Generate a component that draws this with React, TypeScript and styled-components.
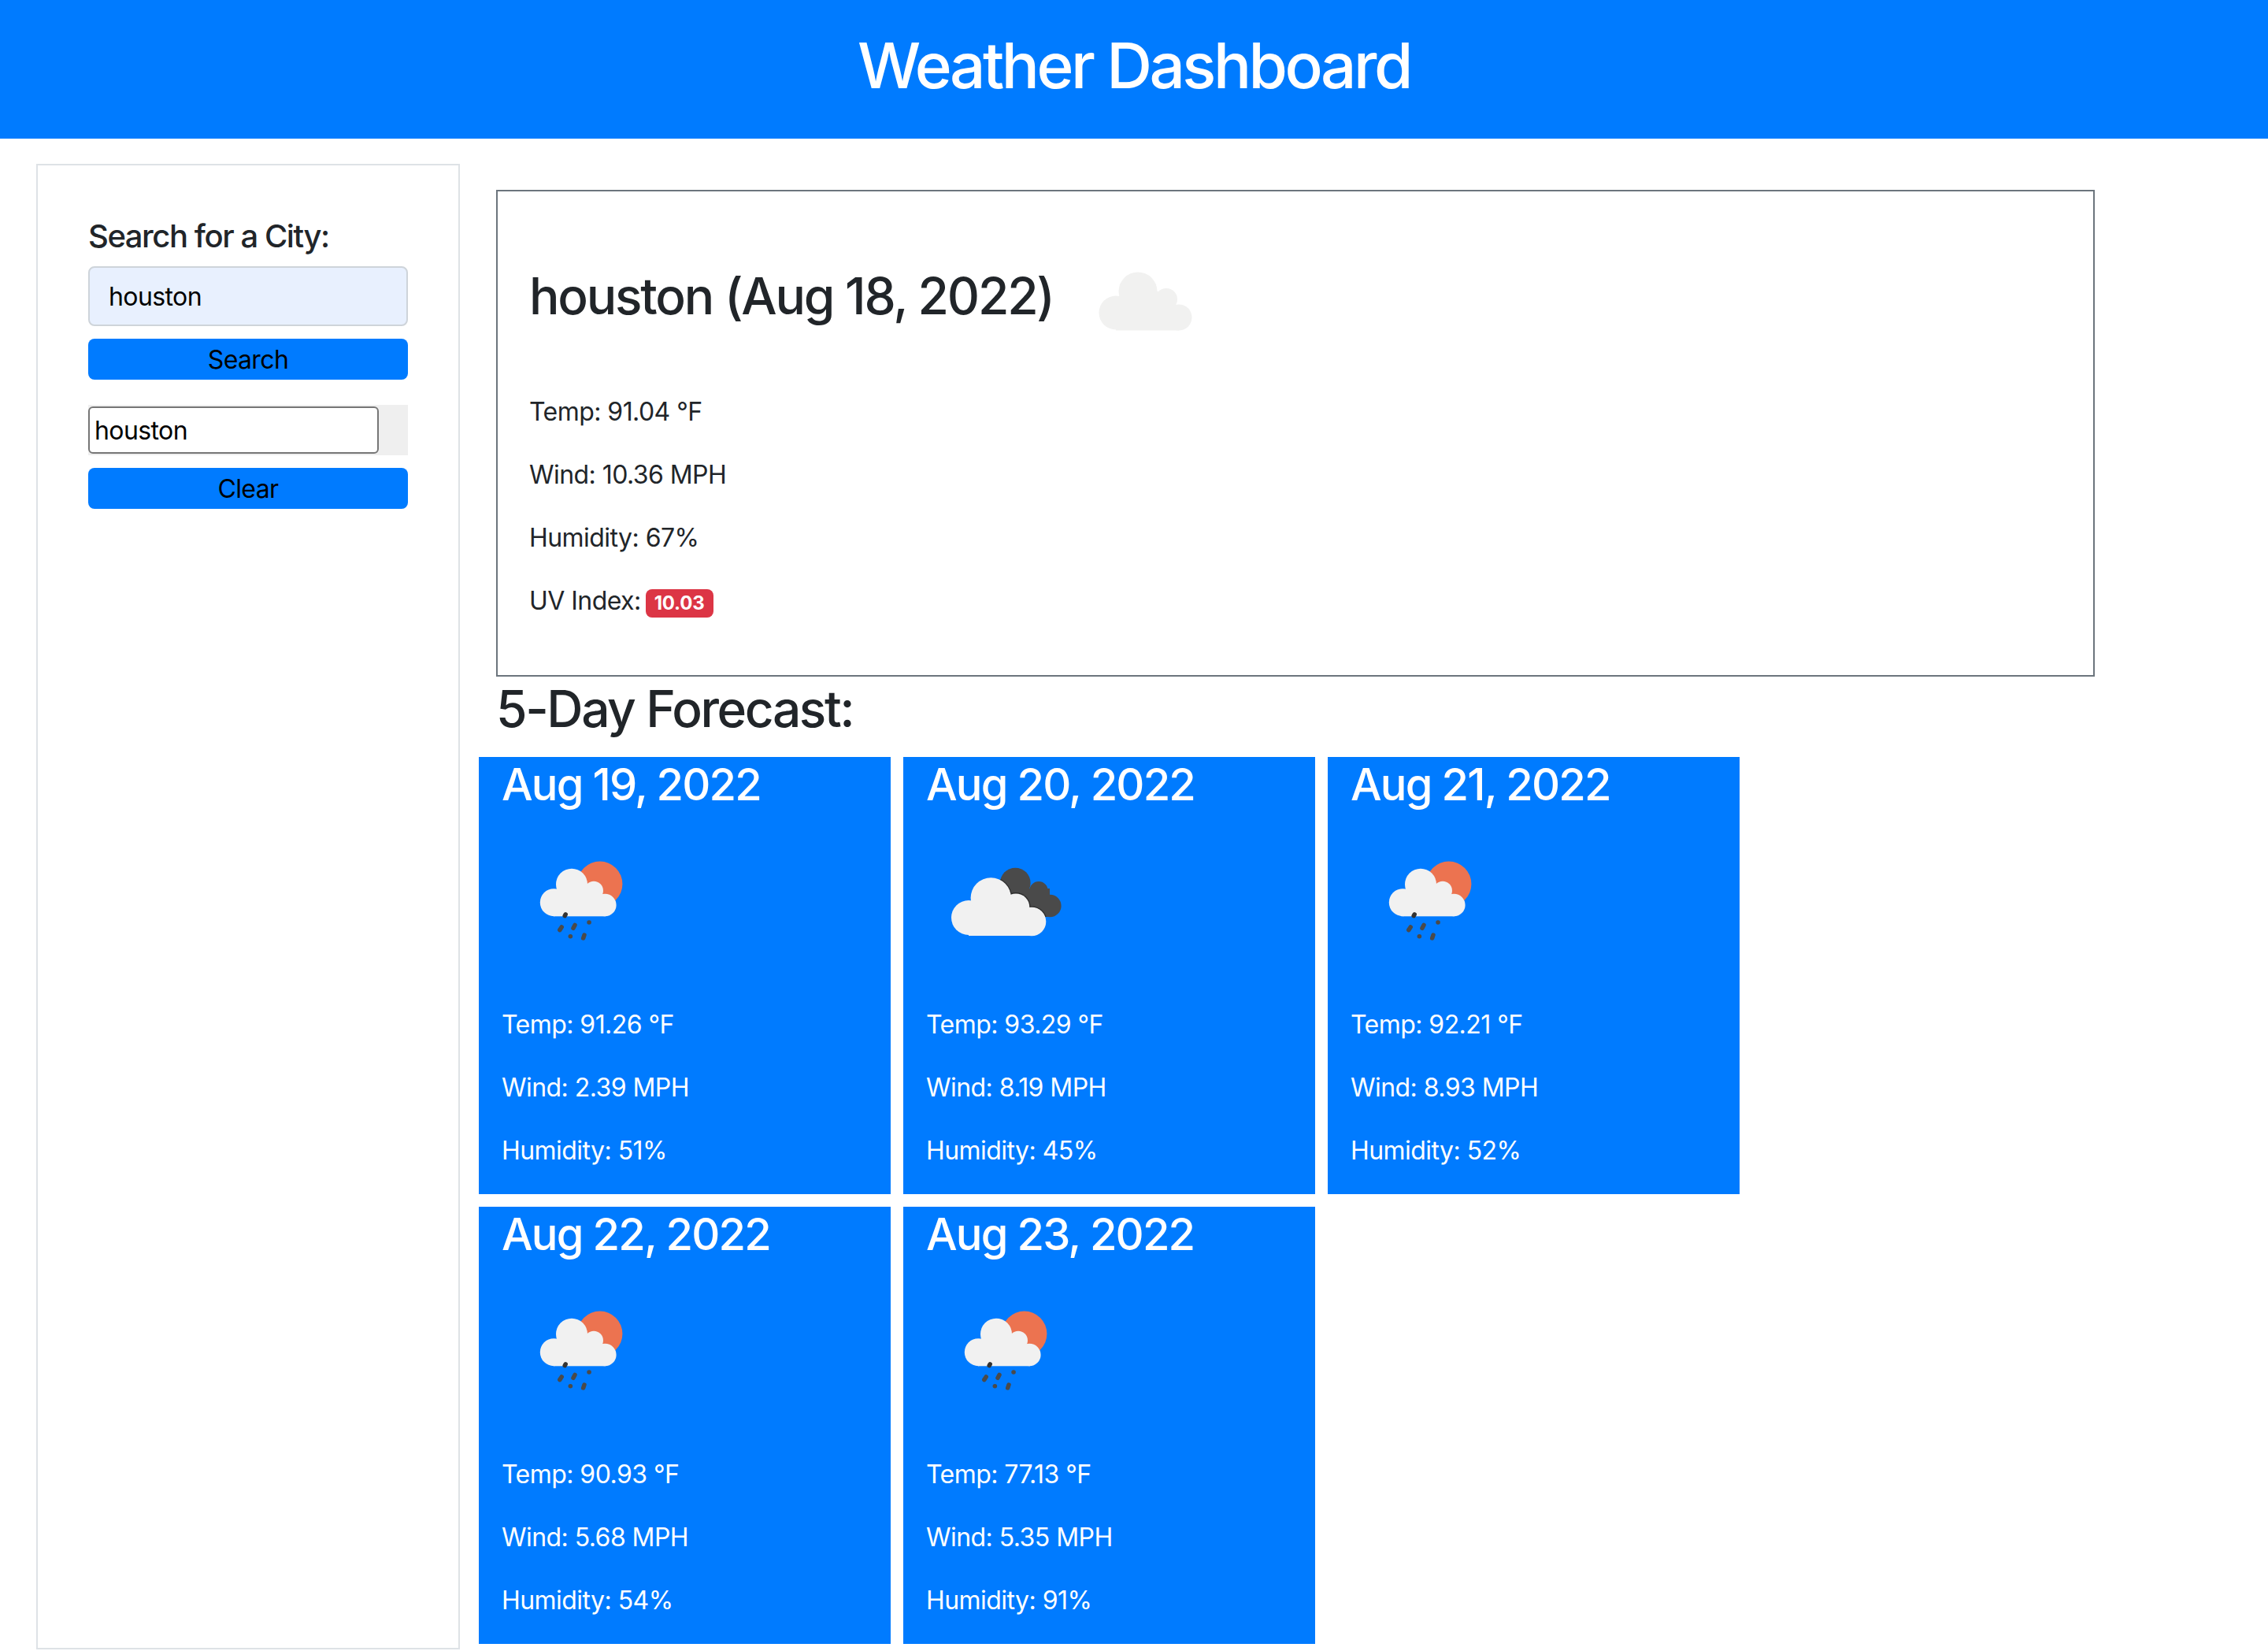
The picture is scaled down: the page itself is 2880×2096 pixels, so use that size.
import React from "react";
import styled, { createGlobalStyle } from "styled-components";

const Global = createGlobalStyle`
  html, body { margin: 0; padding: 0; background: #fff; }
  body { font-family: Inter, "Liberation Sans", sans-serif; color: #212529; font-size: 32px; line-height: 48px; }
  * { box-sizing: border-box; }
`;

const Header = styled.header`
  height: 176px;
  background: #007bff;
  display: flex;
  align-items: center;
  justify-content: center;
`;
const Title = styled.h1`
  margin: 0;
  padding-bottom: 10px;
  font-size: 80px;
  font-weight: 550;
  line-height: 96px;
  color: #fff;
  letter-spacing: -3.5px;
`;
const Page = styled.div`
  display: flex;
  align-items: flex-start;
`;
const Sidebar = styled.aside`
  margin: 32px 0 0 46px;
  width: 538px;
  height: 1886px;
  border: 2px solid #dee2e6;
  padding: 66px 64px 0;
`;
const SearchLabel = styled.div`
  font-size: 40px;
  font-weight: 550;
  line-height: 48px;
  margin-bottom: 14px;
  letter-spacing: -1.45px;
`;
const CityInput = styled.input`
  display: block;
  width: 100%;
  height: 76px;
  background: #e8f0fe;
  border: 2px solid #ced4da;
  border-radius: 8px;
  padding: 0 24px;
  font: 400 32px Inter, sans-serif;
  letter-spacing: -0.6px;
  color: #000;
  outline: none;
`;
const PrimaryButton = styled.button`
  display: block;
  width: 100%;
  height: 52px;
  margin-top: 16px;
  padding: 0;
  border: none;
  border-radius: 8px;
  background: #007bff;
  color: #000;
  font: 400 32px Inter, sans-serif;
  letter-spacing: -0.6px;
`;
const HistoryRow = styled.div`
  margin-top: 32px;
  height: 64px;
  background: #efefef;
  padding: 2px 37px 2px 0;
`;
const HistoryButton = styled.button`
  display: block;
  width: 100%;
  height: 60px;
  padding: 0 0 0 6px;
  text-align: left;
  background: #fff;
  border: 2px solid #767676;
  border-radius: 6px;
  color: #000;
  font: 400 32px Inter, sans-serif;
  letter-spacing: -0.6px;
`;
const Main = styled.main`
  margin-left: 24px;
  flex: 1;
`;
const CurrentBox = styled.section`
  width: 2030px;
  height: 618px;
  margin: 65px 0 0 22px;
  border: 2px solid #6c757d;
  padding: 34px 40px 0;
`;
const CurrentHead = styled.div`
  display: flex;
  align-items: center;
  height: 200px;
  margin-bottom: 22px;
`;
const CityName = styled.h2`
  margin: 0 42px 0 0;
  padding-bottom: 4px;
  font-size: 64px;
  font-weight: 550;
  line-height: 77px;
  letter-spacing: -2.2px;
`;
const Stat = styled.p`
  margin: 0 0 32px;
  font-size: 32px;
  line-height: 48px;
  letter-spacing: -0.55px;
`;
const Badge = styled.span`
  display: inline-block;
  margin-left: 6px;
  padding: 8px 11px;
  background: #dc3545;
  color: #fff;
  border-radius: 8px;
  font-size: 24px;
  font-weight: 700;
  line-height: 20px;
  letter-spacing: -0.2px;
`;
const ForecastTitle = styled.h2`
  margin: 2px 0 23px 22px;
  font-size: 64px;
  font-weight: 550;
  line-height: 77px;
  letter-spacing: -2.4px;
`;
const Cards = styled.div`
  display: grid;
  grid-template-columns: repeat(3, 523px);
  grid-auto-rows: 555px;
  gap: 16px;
`;
const Card = styled.article`
  background: #007bff;
  color: #fff;
  padding: 2px 29px 0;
`;
const CardDate = styled.h3`
  margin: 0 0 10px;
  font-size: 56px;
  font-weight: 550;
  line-height: 67px;
  letter-spacing: -1.85px;
`;
const CardIconSlot = styled.div`
  height: 200px;
  margin-bottom: 37px;
  margin-left: 2px;
`;
const IconSvg = styled.svg`
  display: block;
  flex: none;
`;
const HeadIconSvg = styled(IconSvg)`
  margin-top: 6px;
`;

const Cloud: React.FC<{ fill: string; lobes: number[][]; rects: number[][] }> = ({ fill, lobes, rects }) => (
  <g fill={fill}>
    {lobes.map(([cx, cy, r], i) => (
      <circle key={i} cx={cx} cy={cy} r={r} />
    ))}
    {rects.map(([x, y, w, h], i) => (
      <rect key={i} x={x} y={y} width={w} height={h} />
    ))}
  </g>
);

const PlainCloudIcon = () => (
  <HeadIconSvg width="160" height="120" viewBox="0 0 160 120">
    <Cloud
      fill="#f1f1f0"
      lobes={[[37, 77, 21.5], [65, 50, 24.5], [101, 60, 14], [117, 83, 16.5]]}
      rects={[[37, 83, 80, 16.5], [45, 50, 62, 33]]}
    />
  </HeadIconSvg>
);

const RainIcon = () => (
  <IconSvg width="200" height="200" viewBox="0 0 200 200">
    <circle cx="122.7" cy="82.3" r="28.7" fill="#ec7350" />
    <Cloud
      fill="#f1f1f1"
      lobes={[[64.3, 105.7, 17.5], [87, 82.7, 20], [115, 90.7, 12], [129.3, 109, 14.3]]}
      rects={[[64, 109, 66, 14.3], [72, 84, 43, 25], [112, 95, 12, 16]]}
    />
    <g stroke="#4a4a4a" strokeWidth="5.5" strokeLinecap="round" fill="none">
      <path d="M79.2 120.8 78.2 122.6" stroke="#333" />
      <path d="M74.2 137 71.8 140.6" />
      <path d="M91 134.5 89 138.3" />
      <path d="M109 131h.1" />
      <path d="M85.3 148.7h.1" />
      <path d="M103 147 101.7 151" />
    </g>
  </IconSvg>
);

const BrokenIcon = () => (
  <IconSvg width="200" height="200" viewBox="0 0 200 200">
    <defs>
      <clipPath id="broken-dark">
        <circle cx="111.3" cy="81" r="19.3" />
        <circle cx="141" cy="90.7" r="11.7" />
        <circle cx="155.3" cy="110" r="14.3" />
        <rect x="105" y="85" width="50" height="39" />
      </clipPath>
    </defs>
    <Cloud
      fill="#4a4a4a"
      lobes={[[111.3, 81, 19.3], [141, 90.7, 11.7], [155.3, 110, 14.3]]}
      rects={[[111, 88, 44, 36]]}
    />
    <g clipPath="url(#broken-dark)">
      <Cloud
        fill="#2b2b2b"
        lobes={[[80.3, 100, 27], [112, 111.7, 18.6], [132, 130, 19.6]]}
        rects={[[80, 111, 52, 37]]}
      />
    </g>
    <Cloud
      fill="#f1f1f1"
      lobes={[[52, 125, 22], [80.3, 100, 25.7], [112, 111.7, 17.3], [132, 130, 18.3]]}
      rects={[[52, 130, 80, 18], [62, 100, 56, 30]]}
    />
  </IconSvg>
);

const forecast = [
  { date: "Aug 19, 2022", temp: "91.26", wind: "2.39", hum: "51", icon: <RainIcon /> },
  { date: "Aug 20, 2022", temp: "93.29", wind: "8.19", hum: "45", icon: <BrokenIcon /> },
  { date: "Aug 21, 2022", temp: "92.21", wind: "8.93", hum: "52", icon: <RainIcon /> },
  { date: "Aug 22, 2022", temp: "90.93", wind: "5.68", hum: "54", icon: <RainIcon /> },
  { date: "Aug 23, 2022", temp: "77.13", wind: "5.35", hum: "91", icon: <RainIcon /> },
];

export default function App() {
  return (
    <>
      <Global />
      <Header>
        <Title>Weather Dashboard</Title>
      </Header>
      <Page>
        <Sidebar>
          <SearchLabel>Search for a City:</SearchLabel>
          <CityInput defaultValue="houston" />
          <PrimaryButton>Search</PrimaryButton>
          <HistoryRow>
            <HistoryButton>houston</HistoryButton>
          </HistoryRow>
          <PrimaryButton>Clear</PrimaryButton>
        </Sidebar>
        <Main>
          <CurrentBox>
            <CurrentHead>
              <CityName>houston (Aug 18, 2022)</CityName>
              <PlainCloudIcon />
            </CurrentHead>
            <Stat>Temp: 91.04 °F</Stat>
            <Stat>Wind: 10.36 MPH</Stat>
            <Stat>Humidity: 67%</Stat>
            <Stat>
              UV Index:<Badge>10.03</Badge>
            </Stat>
          </CurrentBox>
          <ForecastTitle>5-Day Forecast:</ForecastTitle>
          <Cards>
            {forecast.map((d) => (
              <Card key={d.date}>
                <CardDate>{d.date}</CardDate>
                <CardIconSlot>{d.icon}</CardIconSlot>
                <Stat>Temp: {d.temp} °F</Stat>
                <Stat>Wind: {d.wind} MPH</Stat>
                <Stat>Humidity: {d.hum}%</Stat>
              </Card>
            ))}
          </Cards>
        </Main>
      </Page>
    </>
  );
}
